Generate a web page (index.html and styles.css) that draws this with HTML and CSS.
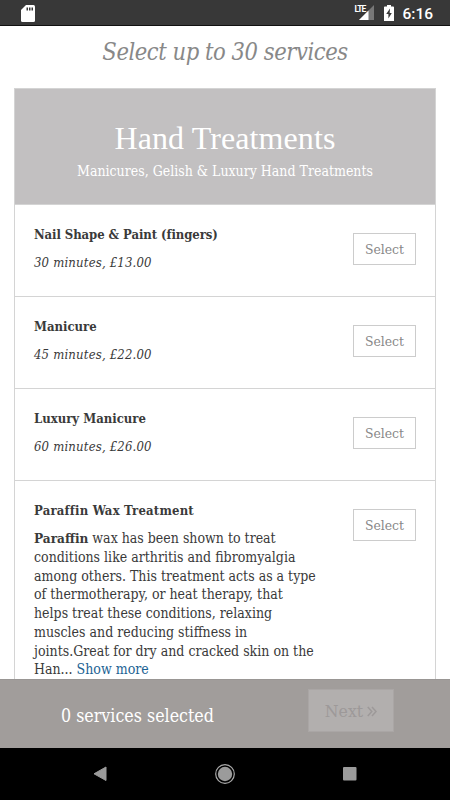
FILE: index.html
```html
<!DOCTYPE html>
<html lang="en">
<head>
  <meta charset="UTF-8">
  <meta name="viewport" content="width=device-width, initial-scale=1.0">
  <title>Select services</title>
  <link rel="stylesheet" href="styles.css">
</head>
<body>
  <div class="screen">
    <div class="status-bar">
      <svg class="sd-icon" width="14" height="17" viewBox="0 0 14 17">
        <path d="M5 0h7.500q1.500 0 1.500 1.500v14q0 1.500-1.500 1.500h-11Q0 17 0 15.500V5z" fill="#fff"/>
        <path d="M5.500 2.500h1.500V5.500H5.500zM8 2.500h1.500V5.500H8zM10.500 2.500h1.500V5.500h-1.500z" fill="#383838"/>
      </svg>
      <div class="status-right">
        <div class="signal">
          <span class="lte">LTE</span>
          <svg width="15" height="15" viewBox="0 0 15 15">
            <path d="M15 0v15H0z" fill="#777"/>
            <path d="M9.500 5.500V15H0z" fill="#fff"/>
          </svg>
        </div>
        <svg class="battery-icon" width="10" height="16" viewBox="0 0 10 16">
          <path d="M3 0h4v1.500h2.200q.8 0 .8.800V16H0V2.300q0-.8.800-.8H3z" fill="#fff"/>
          <path d="M6 3.500L2.200 9h2.200v4.500L7.800 8H5.700z" fill="#383838"/>
        </svg>
        <span class="clock">6:16</span>
      </div>
    </div>

    <main class="content">
      <h1 class="page-title">Select up to 30 services</h1>
      <section class="service-group">
        <header class="group-header">
          <h2 class="group-title">Hand Treatments</h2>
          <p class="group-subtitle">Manicures, Gelish &amp; Luxury Hand Treatments</p>
        </header>

        <div class="service">
          <div class="service-info">
            <h3 class="service-name long-name">Nail Shape &amp; Paint (fingers)</h3>
            <p class="service-meta">30 minutes, £13.00</p>
          </div>
          <button class="select-button">Select</button>
        </div>
        <div class="service">
          <div class="service-info">
            <h3 class="service-name">Manicure</h3>
            <p class="service-meta">45 minutes, £22.00</p>
          </div>
          <button class="select-button">Select</button>
        </div>
        <div class="service">
          <div class="service-info">
            <h3 class="service-name">Luxury Manicure</h3>
            <p class="service-meta">60 minutes, £26.00</p>
          </div>
          <button class="select-button">Select</button>
        </div>
        <div class="service">
          <div class="service-info">
            <h3 class="service-name wide-name">Paraffin Wax Treatment</h3>
            <p class="service-text"><b>Paraffin</b> wax has been shown to treat<br>conditions like arthritis and fibromyalgia<br>among others. This treatment acts as a type<br>of thermotherapy, or heat therapy, that<br>helps treat these conditions, relaxing<br>muscles and reducing stiffness in<br>joints.Great for dry and cracked skin on the<br>Han... <a class="show-more">Show more</a></p>
          </div>
          <button class="select-button">Select</button>
        </div>
      </section>
    </main>

    <footer class="summary">
      <span class="summary-text">0 services selected</span>
      <button class="next-button">Next
        <svg width="10" height="11" viewBox="0 0 10 11">
          <path d="M.8 1l4 4.500-4 4.500M5 1l4 4.500L5 10" fill="none" stroke="currentColor" stroke-width="1.500"/>
        </svg>
      </button>
    </footer>

    <nav class="nav-bar">
      <svg width="14" height="16" viewBox="0 0 14 16"><path d="M13 1v13.500L1 7.800z" fill="#9b9b9b" stroke="#9b9b9b" stroke-linejoin="round"/></svg>
      <svg width="20" height="20" viewBox="0 0 20 20">
        <circle cx="10" cy="10" r="9.300" fill="none" stroke="#aaa" stroke-width="1.200"/>
        <circle cx="10" cy="10" r="7.200" fill="#9b9b9b"/>
      </svg>
      <svg width="14" height="14" viewBox="0 0 14 14"><rect width="13.500" height="13.500" rx="1" fill="#9b9b9b"/></svg>
    </nav>
  </div>
</body>
</html>
```
FILE: styles.css
```css
:root {
  --border-color: #d4d4d4;
  --text-color: #3a3a3a;
  --font-family: 'DejaVu Serif Condensed', 'DejaVu Serif', serif;
}

* { box-sizing: border-box; }

body {
  margin: 0;
  background-color: #fff;
  color: var(--text-color);
  font-family: var(--font-family);
  font-stretch: condensed;
}

h1, h2, h3, p { margin: 0; font-weight: normal; white-space: nowrap; }

.screen {
  display: flex;
  flex-direction: column;
  width: 450px;
  height: 800px;
  overflow: hidden;
}

.status-bar {
  flex: none;
  display: flex;
  justify-content: space-between;
  height: 26px;
  padding: 5px 17px 0 21px;
  background-color: #383838;
  border-bottom: 1px solid #111;
}

.status-right { display: flex; align-items: flex-start; }
.signal { display: flex; position: relative; padding-left: 5px; margin-right: 10px; }
.lte {
  position: absolute;
  left: 0;
  top: 0;
  font: bold 8.5px/8px Roboto, sans-serif;
  letter-spacing: -0.9px;
  color: #fff;
}
.battery-icon { margin-right: 8px; }
.clock { font: 500 15.5px/18px Roboto, sans-serif; color: #fff; }

.content { flex: 1; min-height: 0; overflow: hidden; padding: 0 14px; }
.page-title {
  height: 62px;
  padding-top: 10px;
  text-align: center;
  font-size: 23.5px;
  letter-spacing: -0.45px;
  line-height: 32px;
  font-style: italic;
  color: #888;
}

.service-group { border: 1px solid var(--border-color); }
.group-header {
  height: 115px;
  padding-top: 29px;
  background-color: #c2c0c1;
  text-align: center;
  color: #fff;
}
.group-title {
  font-family: 'Liberation Serif', serif;
  font-size: 32px;
  letter-spacing: 0.1px;
  line-height: 40px;
}
.group-subtitle { font-size: 14px; line-height: 26px; }

.service {
  display: flex;
  justify-content: space-between;
  align-items: flex-start;
  height: 92px;
  padding: 20px 19px 0;
  border-top: 1px solid var(--border-color);
}
.service:last-child { height: 220px; }
.service-name { font-size: 13px; line-height: 20px; font-weight: bold; }
.long-name { letter-spacing: -0.08px; }
.wide-name { letter-spacing: 0.2px; }
.service-meta {
  margin-top: 8px;
  font-size: 13px;
  letter-spacing: 0.18px;
  line-height: 20px;
  font-style: italic;
}
.service-text { margin-top: 8px; font-size: 14px; line-height: 18.750px; }
.service-text b { font-size: 13.5px; }
.show-more { color: #1c6394; }

.select-button {
  width: 63px;
  height: 32px;
  margin-top: 8px;
  padding: 0 0 1px;
  border: 1px solid #ccc;
  background-color: #fff;
  color: #888;
  font: 13.8px var(--font-family);
}

.summary {
  flex: none;
  display: flex;
  justify-content: space-between;
  align-items: flex-start;
  height: 69px;
  padding: 9px 56px 0 61px;
  background-color: #a19d9b;
  border-top: 1px solid #999694;
}
.summary-text { font-size: 17.7px; line-height: 54px; color: #fff; }
.next-button {
  width: 86px;
  height: 43px;
  padding: 0;
  border: 1px solid #aaa6a5;
  background-color: #b2afae;
  color: #9d9999;
  font: 17.5px var(--font-family);
}
.next-button svg { margin-left: -1px; }

.nav-bar {
  flex: none;
  display: flex;
  justify-content: space-between;
  align-items: center;
  height: 52px;
  padding: 0 93px;
  background-color: #000;
}
```
